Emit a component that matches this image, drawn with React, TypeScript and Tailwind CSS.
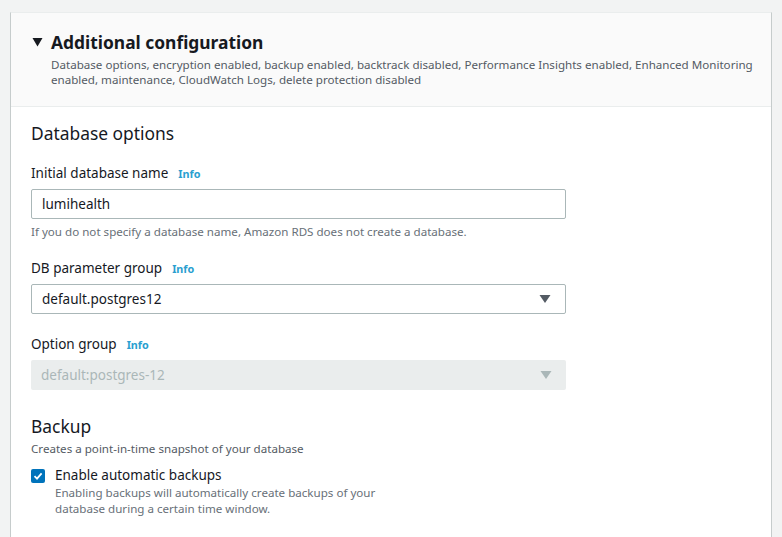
const font = { fontFamily: '"Noto Sans", "Open Sans", Arial, sans-serif' };

function Info() {
  return <span className="ml-[10px] text-[10.8px] font-bold text-[#2a9fd0]">Info</span>;
}

function Caret({ disabled = false }: { disabled?: boolean }) {
  return (
    <svg width="12" height="10" viewBox="0 0 12 10" className="shrink-0">
      <path d="M0.5 1 H11.5 L6 9 Z" fill={disabled ? "#aab7b8" : "#545b64"} />
    </svg>
  );
}

function Select({ value, disabled = false }: { value: string; disabled?: boolean }) {
  return (
    <div
      className={`mt-[5px] flex h-[30px] w-[535px] items-center justify-between rounded-[2px] pl-[10px] pr-[14px] text-[13.5px] ${
        disabled ? "bg-[#eaeded] text-[#aab7b8]" : "border border-[#aab7b8] bg-white text-[#16191f]"
      }`}
    >
      <span>{value}</span>
      <Caret disabled={disabled} />
    </div>
  );
}

export default function App() {
  return (
    <div className="h-[537px] w-[782px] overflow-hidden bg-[#f2f3f3] pl-[10px] pr-[10px] pt-[12px]" style={font}>
      <div className="h-[600px] border-l border-r border-t border-l-[#c6cccc] border-r-[#c6cccc] border-t-[#eaeded] bg-white">
        {/* header */}
        <div className="h-[94px] border-b border-[#eaeded] bg-[#fafafa] pl-[21px] pr-[6px] pt-[18px]">
          <div className="flex items-center">
            <svg width="11" height="10" viewBox="0 0 11 10" className="mr-[8px]">
              <path d="M0.5 1 H10.5 L5.5 9.5 Z" fill="#16191f" />
            </svg>
            <span className="text-[17.4px] font-bold leading-[22px] text-[#16191f]">Additional configuration</span>
          </div>
          <p className="ml-[19px] mt-[4px] text-[11.6px] leading-[15px] text-[#545b64]">
            Database options, encryption enabled, backup enabled, backtrack disabled, Performance Insights enabled, Enhanced Monitoring
            enabled, maintenance, CloudWatch Logs, delete protection disabled
          </p>
        </div>

        {/* body */}
        <div className="pl-[20px] pt-[14px] text-[#16191f]">
          <h2 className="text-[17.4px] leading-[24px]">Database options</h2>

          <div className="mt-[18px]">
            <div className="flex items-baseline text-[13.5px] leading-[20px]">
              Initial database name <Info />
            </div>
            <div className="mt-[5px] flex h-[30px] w-[535px] items-center rounded-[2px] border border-[#aab7b8] bg-white pl-[10px] text-[13.5px]">
              lumihealth
            </div>
            <p className="mt-[5px] text-[11.6px] leading-[16px] text-[#687078]">
              If you do not specify a database name, Amazon RDS does not create a database.
            </p>
          </div>

          <div className="mt-[18px]">
            <div className="flex items-baseline text-[13.5px] leading-[20px]">
              DB parameter group <Info />
            </div>
            <Select value="default.postgres12" />
          </div>

          <div className="mt-[20px]">
            <div className="flex items-baseline text-[13.5px] leading-[20px]">
              Option group <Info />
            </div>
            <Select value="default:postgres-12" disabled />
          </div>

          <h2 className="mt-[24px] text-[17.4px] leading-[24px]">Backup</h2>
          <p className="mt-[3px] text-[11.6px] leading-[16px] text-[#545b64]">Creates a point-in-time snapshot of your database</p>

          <div className="mt-[9px] flex items-start">
            <div className="mt-[3px] flex h-[14px] w-[14px] items-center justify-center rounded-[2px] bg-[#0073bb]">
              <svg width="10" height="10" viewBox="0 0 10 10">
                <path d="M1.5 5.2 L4 7.6 L8.6 2.4" stroke="white" strokeWidth="1.8" fill="none" />
              </svg>
            </div>
            <div className="ml-[10px]">
              <div className="text-[13.5px] leading-[19px]">Enable automatic backups</div>
              <p className="w-[340px] text-[11.6px] leading-[16px] text-[#687078]">
                Enabling backups will automatically create backups of your database during a certain time window.
              </p>
            </div>
          </div>
        </div>
      </div>
    </div>
  );
}
